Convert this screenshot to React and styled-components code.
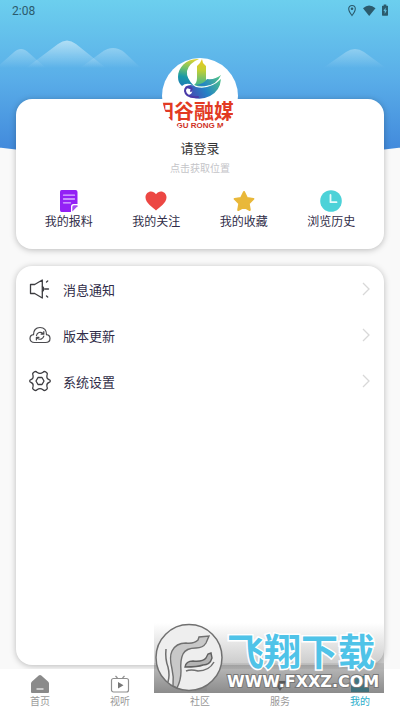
import React from 'react';
import styled, { createGlobalStyle } from 'styled-components';

const GlobalStyle = createGlobalStyle`
  * {
    box-sizing: border-box;
  }

  body {
    margin: 0;
    background: #f9f9f9;
    font-family: 'Noto Sans CJK SC', sans-serif;
    color: #312d48;
  }

  button {
    border: 0;
    padding: 0;
    background: none;
    font: inherit;
    color: inherit;
    cursor: pointer;
  }

  svg {
    display: block;
    flex: none;
  }
`;

const shortcuts = [
  { label: '我的报料', icon: <NoteIcon /> },
  { label: '我的关注', icon: <HeartIcon /> },
  { label: '我的收藏', icon: <StarIcon /> },
  { label: '浏览历史', icon: <ClockIcon /> },
];

const settings = [
  { label: '消息通知', icon: <SpeakerIcon /> },
  { label: '版本更新', icon: <CloudIcon /> },
  { label: '系统设置', icon: <GearIcon /> },
];

const tabs = [
  { label: '首页', icon: <HomeIcon /> },
  { label: '视听', icon: <TvIcon /> },
  { label: '社区', icon: <CommunityIcon /> },
  { label: '服务', icon: <ServiceIcon /> },
  { label: '我的', icon: <MineIcon />, active: true },
];

function App() {
  return (
    <Page>
      <GlobalStyle />
      <Hero>
        <StatusBar>
          <span>2:08</span>
          <StatusIcons />
        </StatusBar>
        <Mountains>
          <MountainRange />
          <SinglePeak />
        </Mountains>
      </Hero>
      <Profile>
        <Avatar aria-label='头像'>
          <BoatLogo />
          <LogoName>阳谷融媒</LogoName>
          <LogoPinyin>GU RONG M</LogoPinyin>
        </Avatar>
        <Login>请登录</Login>
        <Location>点击获取位置</Location>
        <Shortcuts>
          {shortcuts.map(({ label, icon }) => (
            <Shortcut key={label}>
              {icon}
              {label}
            </Shortcut>
          ))}
        </Shortcuts>
      </Profile>
      <Menu>
        {settings.map(({ label, icon }) => (
          <MenuRow key={label}>
            {icon}
            <MenuLabel>{label}</MenuLabel>
            <Chevron />
          </MenuRow>
        ))}
      </Menu>
      <TabBar>
        {tabs.map(({ label, icon, active }) => (
          <Tab key={label} $active={active}>
            {icon}
            {label}
          </Tab>
        ))}
      </TabBar>
      <Watermark>
        <HorseLogo />
        <WatermarkText>
          <WatermarkName>飞翔下载</WatermarkName>
          <WatermarkUrl>WWW.FXXZ.COM</WatermarkUrl>
        </WatermarkText>
      </Watermark>
    </Page>
  );
}

function StatusIcons() {
  return (
    <svg width='42' height='14' viewBox='0 0 42 14' fill='#2b5a6c'>
      <path
        d='M5 1.500a3.300 3.300 0 0 0-3.300 3.300C1.700 7.400 5 11.500 5 11.500S8.300 7.400 8.300 4.800A3.300 3.300 0 0 0 5 1.500z'
        fill='none'
        stroke='#2b5a6c'
        strokeWidth='1.100'
      />
      <circle cx='5' cy='4.800' r='1.300' />
      <path d='M16 4.200Q22 -1 28.500 4.200L22.200 12z' />
      <path d='M35.500 1.800h1.200V.5h2.600v1.300h1.200q.5 0 .5.600v8.500q0 .8-.6.800h-4.800q-.6 0-.6-.8V2.400q0-.6.500-.6z' />
      <path d='M38.600 3.500l-2.200 3.500h1.300v3l2.200-3.700h-1.300z' fill='#63bfe0' />
    </svg>
  );
}

function MountainRange() {
  return (
    <svg width='141' height='30' viewBox='0 0 141 30'>
      <defs>
        <linearGradient id='peak' x1='0' y1='0' x2='0' y2='1'>
          <stop offset='0' stopColor='#fff' stopOpacity='.5' />
          <stop offset='1' stopColor='#fff' stopOpacity='0' />
        </linearGradient>
        <linearGradient id='peakSoft' x1='0' y1='0' x2='0' y2='1'>
          <stop offset='0' stopColor='#fff' stopOpacity='.3' />
          <stop offset='1' stopColor='#fff' stopOpacity='0' />
        </linearGradient>
      </defs>
      <path d='M-4 29L13 14Q21 6 29 14L46 29z' fill='url(#peakSoft)' />
      <path d='M80 29L102 13Q113 5 124 13L141 29z' fill='url(#peakSoft)' />
      <path d='M26 29L58 5Q67-2 76 5L106 29z' fill='url(#peak)' />
    </svg>
  );
}

function SinglePeak() {
  return (
    <svg width='64' height='30' viewBox='0 0 64 30'>
      <path d='M1 29L24 13Q33 7 42 13L64 29z' fill='url(#peakSoft)' />
    </svg>
  );
}

function BoatLogo() {
  return (
    <svg width='44' height='43' viewBox='0 0 44 43'>
      <defs>
        <linearGradient id='sail' gradientUnits='userSpaceOnUse' x1='14' y1='0' x2='8' y2='28'>
          <stop offset='0' stopColor='#e9d52a' />
          <stop offset='.4' stopColor='#6fc06c' />
          <stop offset='.7' stopColor='#1899a8' />
          <stop offset='1' stopColor='#1f7fb4' />
        </linearGradient>
        <linearGradient id='tower' x1='0' y1='0' x2='0' y2='1'>
          <stop offset='0' stopColor='#ecc81e' />
          <stop offset='.4' stopColor='#c3cf33' />
          <stop offset='1' stopColor='#35b596' />
        </linearGradient>
        <linearGradient id='hull' gradientUnits='userSpaceOnUse' x1='10' y1='38' x2='42' y2='20'>
          <stop offset='0' stopColor='#4b43b0' />
          <stop offset='.5' stopColor='#2383c6' />
          <stop offset='1' stopColor='#4fc08a' />
        </linearGradient>
      </defs>
      <path
        d='M21 1C9 0 0 9 0 19q0 6 4 9 3-3 8-2l4 2Q8 20 9 13 11 5 21 1z'
        fill='url(#sail)'
      />
      <path
        d='M24 1l1 4 3 3v12q0 5 2 7-6 3-14 0 3-2 3-7V8l3-3z'
        fill='url(#tower)'
      />
      <path d='M29 21q8 1 14-4-4 10-16 11-5 0-9-1 8-1 11-6z' fill='url(#hull)' />
      <path
        d='M7 29q6-4 11 0 14 3 25-8-1 12-11 17-12 6-22-1 5-1 4-5z'
        fill='url(#hull)'
      />
      <path
        d='M20 39q-12 1-13-6 0-4 4-4 4 1 2 4'
        fill='none'
        stroke='#4a3aa8'
        strokeWidth='2'
        strokeLinecap='round'
      />
    </svg>
  );
}

function NoteIcon() {
  return (
    <svg width='22' height='22' viewBox='0 0 22 22'>
      <path
        d='M3.500 0h14Q19.500 0 19.500 2v12h-4q-2.500 0-2.500 2.500V22H3.500Q2 22 2 20V2Q2 0 3.500 0z'
        fill='#9321f5'
      />
      <path d='M19.500 16.300L14.300 21.500V17q0-1.700 1.700-1.700h3.500z' fill='#a74cf2' />
      <path
        d='M5.500 5.200h11M5.500 9h11M5.500 12.800h7'
        stroke='#dcb6ff'
        strokeWidth='1.300'
        strokeLinecap='round'
      />
    </svg>
  );
}

function HeartIcon() {
  return (
    <svg width='22' height='22' viewBox='0 0 22 22'>
      <path
        d='M11 20.500C8 17.500.5 13 .5 7.500.5 1.500 7.500-.5 11 4.200 14.500-.5 21.500 1.500 21.500 7.500 21.500 13 14 17.500 11 20.500z'
        fill='#ec4743'
      />
    </svg>
  );
}

function StarIcon() {
  return (
    <svg width='22' height='22' viewBox='0 0 22 22'>
      <path
        d='M11 2l2.900 5.900 6.500 1-4.700 4.600 1.100 6.500-5.800-3.100L5.200 20l1.100-6.500L1.600 8.900l6.500-1z'
        fill='#e9b83a'
        stroke='#e9b83a'
        strokeWidth='2'
        strokeLinejoin='round'
      />
    </svg>
  );
}

function ClockIcon() {
  return (
    <svg width='22' height='22' viewBox='0 0 22 22'>
      <circle cx='11' cy='11' r='10.800' fill='#4cd2d8' />
      <path
        d='M10.500 5v7.200h6'
        fill='none'
        stroke='#e6fbfb'
        strokeWidth='1.800'
        strokeLinecap='round'
        strokeLinejoin='round'
      />
    </svg>
  );
}

function SpeakerIcon() {
  return (
    <svg
      width='22'
      height='22'
      viewBox='0 0 22 22'
      fill='none'
      stroke='#3c3c40'
      strokeWidth='1.300'
      strokeLinejoin='round'
      strokeLinecap='round'
    >
      <path d='M1.500 6.500h4.200L13.300 2v18L5.700 15.500H1.500z' />
      <path d='M13.500 8.500q2.500 2.500 0 5M17.500 4l1.200-1M16 11h3.500M17.500 18l1.200 1' />
    </svg>
  );
}

function CloudIcon() {
  return (
    <svg
      width='22'
      height='22'
      viewBox='0 0 22 22'
      fill='none'
      stroke='#4a4a4e'
      strokeWidth='1.200'
      strokeLinejoin='round'
      strokeLinecap='round'
    >
      <path d='M5.500 18.500C2.500 18.500 1 16.700 1 14.500c0-2 1.300-3.500 3.500-3.800C4.500 6 7.200 3.500 11 3.500s6.500 2.500 6.500 7.200c2.200.3 3.500 1.800 3.500 3.800 0 2.200-1.500 4-4.500 4z' />
      <path d='M7.500 11.500C8 8.500 11.500 7.300 14 9.500M14.800 7.500v2.700h-2.600M14.800 12.200c-.7 3-4.200 4-6.600 1.900M7.400 16v-2.700H10' />
    </svg>
  );
}

function GearIcon() {
  return (
    <svg
      width='22'
      height='22'
      viewBox='0 0 22 22'
      fill='none'
      stroke='#3c3c40'
      strokeWidth='1.300'
      strokeLinejoin='round'
    >
      <path d='M5.500 1.800Q6.800 1 8 2.300 11 4.500 14 2.300 15.200 1 16.500 1.800L18 3Q18.700 3.800 18 5.300 17.300 8.800 20 9.500 21.300 10 21.300 11T20 12.500Q17.300 13.200 18 16.700 18.700 18.200 18 19L16.500 20.200Q15.200 21 14 19.700 11 17.500 8 19.700 6.800 21 5.500 20.200L4 19Q3.300 18.200 4 16.700 4.700 13.200 2 12.500.7 12 .7 11T2 9.500Q4.700 8.800 4 5.300 3.300 3.800 4 3z' />
      <path d='M9 7.500h4l2 3.500-2 3.500H9L7 11z' />
    </svg>
  );
}

function Chevron() {
  return (
    <svg width='8' height='14' viewBox='0 0 8 14' fill='none'>
      <path d='M1 1l6 6-6 6' stroke='#d8d8d8' strokeWidth='1.300' />
    </svg>
  );
}

function HomeIcon() {
  return (
    <svg width='20' height='18' viewBox='0 0 20 18'>
      <path
        d='M10 0q.7 0 1.300.5L18 6.500q1 .8 1 2V17q0 1-1 1H2q-1 0-1-1V8.500q0-1.200 1-2L8.700.5Q9.300 0 10 0z'
        fill='#8a8a8a'
      />
      <path d='M6.500 14h7' stroke='#eee' strokeWidth='1.300' />
    </svg>
  );
}

function TvIcon() {
  return (
    <svg width='20' height='18' viewBox='0 0 20 18' fill='none' stroke='#8f8f8f'>
      <rect x='1.500' y='3.500' width='17' height='13.500' rx='2' strokeWidth='1.200' />
      <path d='M5.500 1l2 2M14.500 1l-2 2' strokeWidth='1.200' />
      <path d='M8 7l5.500 3.300L8 13.500z' fill='#777' stroke='none' />
    </svg>
  );
}

function CommunityIcon() {
  return (
    <svg width='20' height='18' viewBox='0 0 20 18'>
      <path d='M10 2l7 5v9H3V7z' fill='#eee' />
    </svg>
  );
}

function ServiceIcon() {
  return (
    <svg width='20' height='18' viewBox='0 0 20 18'>
      <path d='M3 6h14l-7 10z' fill='#555' />
    </svg>
  );
}

function MineIcon() {
  return (
    <svg width='20' height='18' viewBox='0 0 20 18'>
      <path d='M5 1h10v7h3q1 0 1 1v8H1V9q0-1 1-1h3z' fill='#0c9dbd' />
    </svg>
  );
}

function HorseLogo() {
  return (
    <svg width='70' height='70' viewBox='0 0 70 70'>
      <circle cx='35' cy='34.500' r='33' fill='#eee' stroke='#707070' strokeWidth='1.500' />
      <path
        d='M19 63Q20 54 18 46 15 34 18 28 22 20 32 20 40 21 44 17L45 14 55 13 52 20Q49 25 42 25 32 25 29 31 26 37 27 48 27 57 23 65z'
        fill='#c8c8c8'
        stroke='#707070'
        strokeWidth='1.400'
      />
      <path
        d='M31 44Q32 38 39 38 49 39 52 35L54 31 57 30 58 35Q56 42 49 42 44 44 31 44z'
        fill='#b4b4b4'
        stroke='#606060'
        strokeWidth='1.400'
      />
      <path
        d='M12 26Q11 36 14 44 16 52 14 59M32 48Q37 46 44 48 55 48 60 39'
        fill='none'
        stroke='#707070'
        strokeWidth='1.500'
      />
    </svg>
  );
}

const Page = styled.main`
  position: relative;
  display: flex;
  flex-direction: column;
  min-height: 100vh;
  overflow: hidden;
`;

const Hero = styled.header`
  height: 160px;
  background: linear-gradient(#6ccfee, #59ade8 50%, #3f85da);
  clip-path: ellipse(130% 100% at 50% 0);
`;

const StatusBar = styled.div`
  display: flex;
  justify-content: space-between;
  align-items: center;
  height: 22px;
  padding: 0 11px 0 12px;
  font: 12px/22px Roboto, sans-serif;
  color: #2b5a6c;
`;

const Mountains = styled.div`
  display: flex;
  justify-content: space-between;
  padding: 17px 14px 0 0;
`;

const Card = styled.section`
  z-index: 1;
  display: flex;
  flex-direction: column;
  margin: 0 16px;
  border-radius: 16px;
  background: #fff;
  box-shadow: 0 1px 6px rgba(0, 0, 0, 0.25);
`;

const Profile = styled(Card)`
  align-items: center;
  height: 150px;
  margin-top: -61px;
`;

const Avatar = styled.button`
  display: flex;
  flex-direction: column;
  align-items: center;
  flex: none;
  width: 76px;
  height: 76px;
  margin-top: -41px;
  border-radius: 50%;
  background: #fff;
  overflow: hidden;
`;

/* wider than the avatar on purpose, the first character runs off its edge */
const LogoName = styled.span`
  align-self: flex-end;
  padding-right: 4px;
  font-size: 20px;
  line-height: 20px;
  font-weight: 700;
  white-space: nowrap;
  color: #e23a22;
`;

const LogoPinyin = styled.span`
  font: bold 8px/10px 'Liberation Sans', sans-serif;
  white-space: nowrap;
  color: #cf3226;
`;

const Login = styled.button`
  margin-top: 4px;
  font-size: 13px;
  line-height: 20px;
  color: #333;
`;

const Location = styled.button`
  margin-top: 2px;
  font-size: 10px;
  line-height: 16px;
  color: #c4c4c8;
`;

const Shortcuts = styled.nav`
  display: grid;
  grid-template-columns: repeat(4, 1fr);
  align-self: stretch;
  margin-top: 14px;
  padding: 0 9px;
`;

const Shortcut = styled.button`
  display: flex;
  flex-direction: column;
  align-items: center;
  font-size: 12px;
  line-height: 18px;
`;

const Menu = styled(Card)`
  flex: 1;
  margin-top: 17px;
  margin-bottom: 4px;
`;

const MenuRow = styled.button`
  display: flex;
  align-items: center;
  gap: 12px;
  height: 46px;
  padding: 0 14px 0 13px;
  font-size: 13px;
  text-align: left;
`;

const MenuLabel = styled.span`
  flex: 1;
`;

const TabBar = styled.nav`
  display: grid;
  grid-template-columns: repeat(5, 1fr);
  height: 42px;
  padding-top: 6px;
  background: #fff;
  z-index: 1;
`;

const Tab = styled.button`
  display: flex;
  flex-direction: column;
  align-items: center;
  font-size: 10px;
  line-height: 16px;
  color: ${({ $active }) => ($active ? '#2eaecb' : '#999')};
`;

const Watermark = styled.aside`
  position: absolute;
  right: 16px;
  bottom: 18px;
  z-index: 2;
  display: flex;
  width: 230px;
  height: 70px;
  background: linear-gradient(
    rgba(90, 90, 90, 0),
    rgba(90, 90, 90, 0.3) 57%,
    rgba(90, 90, 90, 0.4) 58%,
    rgba(90, 90, 90, 0.7)
  );
  pointer-events: none;
`;

const WatermarkText = styled.div`
  display: flex;
  flex-direction: column;
  align-items: flex-start;
  padding: 6px 0 0 3px;
  white-space: nowrap;
`;

const WatermarkName = styled.span`
  font-size: 37px;
  line-height: 43px;
  font-weight: 700;
  color: #4fc3e8;
  -webkit-text-stroke: 3px #fff;
  paint-order: stroke fill;
`;

const WatermarkUrl = styled.span`
  font: bold 16px/20px 'DejaVu Sans', sans-serif;
  color: #fff;
  -webkit-text-stroke: 2px #777;
  paint-order: stroke fill;
`;

export default App;
